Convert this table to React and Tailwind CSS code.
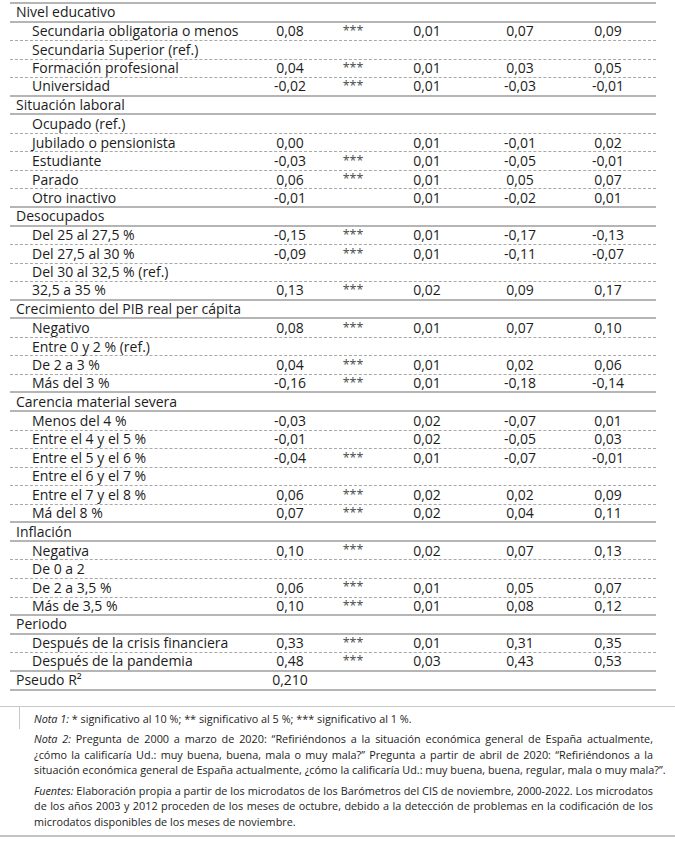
const sections = [
  {
    title: 'Nivel educativo',
    rows: [
      ['Secundaria obligatoria o menos', '0,08', '***', '0,01', '0,07', '0,09'],
      ['Secundaria Superior (ref.)'],
      ['Formación profesional', '0,04', '***', '0,01', '0,03', '0,05'],
      ['Universidad', '-0,02', '***', '0,01', '-0,03', '-0,01'],
    ],
  },
  {
    title: 'Situación laboral',
    rows: [
      ['Ocupado (ref.)'],
      ['Jubilado o pensionista', '0,00', '', '0,01', '-0,01', '0,02'],
      ['Estudiante', '-0,03', '***', '0,01', '-0,05', '-0,01'],
      ['Parado', '0,06', '***', '0,01', '0,05', '0,07'],
      ['Otro inactivo', '-0,01', '', '0,01', '-0,02', '0,01'],
    ],
  },
  {
    title: 'Desocupados',
    rows: [
      ['Del 25 al 27,5 %', '-0,15', '***', '0,01', '-0,17', '-0,13'],
      ['Del 27,5 al 30 %', '-0,09', '***', '0,01', '-0,11', '-0,07'],
      ['Del 30 al 32,5 % (ref.)'],
      ['32,5 a 35 %', '0,13', '***', '0,02', '0,09', '0,17'],
    ],
  },
  {
    title: 'Crecimiento del PIB real per cápita',
    rows: [
      ['Negativo', '0,08', '***', '0,01', '0,07', '0,10'],
      ['Entre 0 y 2 % (ref.)'],
      ['De 2 a 3 %', '0,04', '***', '0,01', '0,02', '0,06'],
      ['Más del 3 %', '-0,16', '***', '0,01', '-0,18', '-0,14'],
    ],
  },
  {
    title: 'Carencia material severa',
    rows: [
      ['Menos del 4 %', '-0,03', '', '0,02', '-0,07', '0,01'],
      ['Entre el 4 y el 5 %', '-0,01', '', '0,02', '-0,05', '0,03'],
      ['Entre el 5 y el 6 %', '-0,04', '***', '0,01', '-0,07', '-0,01'],
      ['Entre el 6 y el 7 %'],
      ['Entre el 7 y el 8 %', '0,06', '***', '0,02', '0,02', '0,09'],
      ['Má del 8 %', '0,07', '***', '0,02', '0,04', '0,11'],
    ],
  },
  {
    title: 'Inflación',
    rows: [
      ['Negativa', '0,10', '***', '0,02', '0,07', '0,13'],
      ['De 0 a 2'],
      ['De 2 a 3,5 %', '0,06', '***', '0,01', '0,05', '0,07'],
      ['Más de 3,5 %', '0,10', '***', '0,01', '0,08', '0,12'],
    ],
  },
  {
    title: 'Periodo',
    rows: [
      ['Después de la crisis financiera', '0,33', '***', '0,01', '0,31', '0,35'],
      ['Después de la pandemia', '0,48', '***', '0,03', '0,43', '0,53'],
    ],
  },
];

const cols = 'grid grid-cols-[250px_60px_66px_82px_104px_72px_1fr]';

function Cells({ vals }) {
  return (
    <>
      <div className="text-center">{vals[0]}</div>
      <div className="text-center text-[12.5px] text-[#4a4a4a]">{vals[1]}</div>
      <div className="text-center">{vals[2]}</div>
      <div className="text-center">{vals[3]}</div>
      <div className="text-center">{vals[4]}</div>
      <div />
    </>
  );
}

function ItemRow({ row, last }) {
  const [label, ...vals] = row;
  return (
    <div
      className={`${cols} h-[18.55px] items-center ${
        last ? 'border-b-2 border-[#b5b5b5]' : 'border-b border-dashed border-[#a8a8a8]'
      }`}
    >
      <div className="pl-[22px] whitespace-nowrap">{label}</div>
      <Cells vals={vals} />
    </div>
  );
}

function Justified({ children }) {
  return <div className="whitespace-nowrap text-justify [text-align-last:justify]">{children}</div>;
}

export default function App() {
  return (
    <div className="h-[842px] w-[675px] overflow-hidden bg-white pt-[2px] text-[#1c1c1c] font-['Open_Sans','Noto_Sans',sans-serif]">
      <div className="ml-[10px] w-[646px] border-t-2 border-[#b5b5b5] text-[14px] leading-none">
        {sections.map((s) => (
          <div key={s.title}>
            <div className={`${cols} h-[18.55px] items-center border-b-2 border-[#b5b5b5]`}>
              <div className="col-span-7 pl-[6px]">{s.title}</div>
            </div>
            {s.rows.map((r, i) => (
              <ItemRow key={r[0]} row={r} last={i === s.rows.length - 1} />
            ))}
          </div>
        ))}
        <div className={`${cols} h-[19px] items-center border-b-2 border-[#b5b5b5]`}>
          <div className="pl-[6px]">Pseudo R²</div>
          <div className="text-center">0,210</div>
        </div>
      </div>

      <div className="mt-[15px] flex border-t border-[#c8c8c8] text-[10.85px] leading-[15.5px]">
        <div className="h-[22px] w-[20px] shrink-0 border-r border-[#c8c8c8]" />
        <div className="w-[633px] pl-[14px] pt-[4px]">
          <div className="whitespace-nowrap">
            <i>Nota 1:</i> * significativo al 10 %; ** significativo al 5 %; *** significativo al 1 %.
          </div>
          <div className="mt-[5px]">
            <Justified>
              <i>Nota 2:</i> Pregunta de 2000 a marzo de 2020: “Refiriéndonos a la situación económica general de España actualmente,
            </Justified>
            <Justified>
              ¿cómo la calificaría Ud.: muy buena, buena, mala o muy mala?” Pregunta a partir de abril de 2020: “Refiriéndonos a la
            </Justified>
            <div className="whitespace-nowrap">
              situación económica general de España actualmente, ¿cómo la calificaría Ud.: muy buena, buena, regular, mala o muy mala?”.
            </div>
          </div>
          <div className="mt-[5px]">
            <Justified>
              <i>Fuentes:</i> Elaboración propia a partir de los microdatos de los Barómetros del CIS de noviembre, 2000-2022. Los microdatos
            </Justified>
            <Justified>
              de los años 2003 y 2012 proceden de los meses de octubre, debido a la detección de problemas en la codificación de los
            </Justified>
            <div className="whitespace-nowrap">microdatos disponibles de los meses de noviembre.</div>
          </div>
        </div>
      </div>
      <div className="mt-[6px] border-t-2 border-[#c4c4c4]" />
    </div>
  );
}
